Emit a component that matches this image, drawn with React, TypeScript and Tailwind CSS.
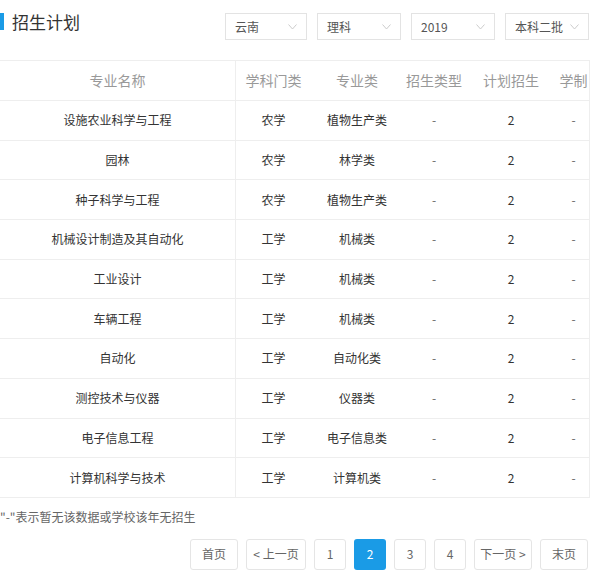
const rows = [
  ["设施农业科学与工程","农学","植物生产类"],
  ["园林","农学","林学类"],
  ["种子科学与工程","农学","植物生产类"],
  ["机械设计制造及其自动化","工学","机械类"],
  ["工业设计","工学","机械类"],
  ["车辆工程","工学","机械类"],
  ["自动化","工学","自动化类"],
  ["测控技术与仪器","工学","仪器类"],
  ["电子信息工程","工学","电子信息类"],
  ["计算机科学与技术","工学","计算机类"],
];
const selects = [["云南","w-[82px]"],["理科","w-[84px]"],["2019","w-[84px]"],["本科二批","w-[84px]"]];
const cols = "grid grid-cols-[236px_75px_92px_62px_92px_33px]";
export default function App() {
  return (
    <div className="w-[600px] h-[584px] bg-white text-[#333] relative" style={{fontFamily:'"Noto Sans CJK SC","Liberation Sans",sans-serif'}}>
      <div className="flex items-start pt-[13px] pr-[11px]">
        <div className="flex items-center gap-[8px] -mt-[4px]">
          <div className="w-[4px] h-[17px] bg-[#1a9be6]" />
          <span className="text-[17px] text-[#333]">招生计划</span>
        </div>
        <div className="ml-auto flex gap-[10px]">
          {selects.map(([t,w])=>(
            <div key={t} className={`${w} h-[27px] border border-[#e3e3e3] flex items-center justify-between px-[9px] text-[12px] text-[#555]`}>
              <span>{t}</span>
              <svg width="9" height="6" viewBox="0 0 9 6"><path d="M0.5 0.5 L4.5 5 L8.5 0.5" fill="none" stroke="#ccc" strokeWidth="1"/></svg>
            </div>
          ))}
        </div>
      </div>
      <div className="mt-[20px] w-[590px] border-t border-r border-[#eee]">
        <div className={`${cols} h-[40px] items-center text-[14px] text-[#999] border-b border-[#eee]`}>
          <div className="text-center border-r border-[#eee] h-full flex items-center justify-center">专业名称</div>
          <div className="text-center">学科门类</div>
          <div className="text-center">专业类</div>
          <div className="text-center whitespace-nowrap">招生类型</div>
          <div className="text-center">计划招生</div>
          <div className="text-center whitespace-nowrap">学制</div>
        </div>
        {rows.map(r=>(
          <div key={r[0]} className={`${cols} h-[39.7px] items-center text-[12px] border-b border-[#eee]`}>
            <div className="text-center border-r border-[#eee] h-full flex items-center justify-center">{r[0]}</div>
            <div className="text-center">{r[1]}</div>
            <div className="text-center">{r[2]}</div>
            <div className="text-center text-[#666]">-</div>
            <div className="text-center">2</div>
            <div className="text-center text-[#666]">-</div>
          </div>
        ))}
      </div>
      <div className="mt-[10px] text-[12px] text-[#666]">"-"表示暂无该数据或学校该年无招生</div>
      <div className="flex justify-end gap-[8px] pr-[12px] mt-[13px] text-[12px] text-[#666]">
        {[["首页","w-[48px]"],["< 上一页","w-[60px]"],["1","w-[32px]"],["2","w-[32px]"],["3","w-[32px]"],["4","w-[32px]"],["下一页 >","w-[58px]"],["末页","w-[48px]"]].map(([t,w])=>(
          <div key={t} className={`${w} h-[31px] flex items-center justify-center rounded-[3px] ${t==="2"?"bg-[#1a9be6] text-white":"border border-[#e5e5e5]"}`}>{t}</div>
        ))}
      </div>
    </div>
  );
}
